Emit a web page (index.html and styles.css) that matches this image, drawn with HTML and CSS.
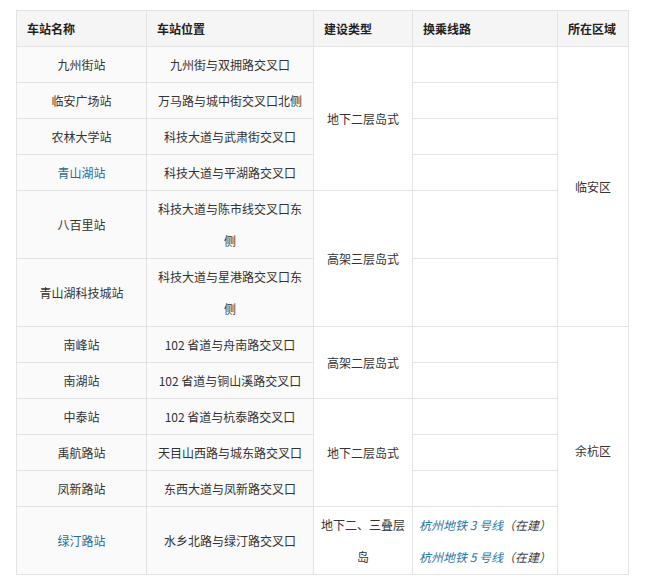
FILE: index.html
```html
<!DOCTYPE html>
<html lang="zh">
<head>
<meta charset="utf-8">
<title>车站列表</title>
<link rel="stylesheet" href="styles.css">
</head>
<body>
<div class="wrap">
<table class="stations">
<colgroup>
<col class="c1"><col class="c2"><col class="c3"><col class="c4"><col class="c5">
</colgroup>
<thead>
<tr><th>车站名称</th><th>车站位置</th><th>建设类型</th><th>换乘线路</th><th>所在区域</th></tr>
</thead>
<tbody>
<tr><td class="tint">九州街站</td><td class="tint">九州街与双拥路交叉口</td><td rowspan="4">地下二层岛式</td><td></td><td rowspan="6">临安区</td></tr>
<tr><td class="tint">临安广场站</td><td class="tint">万马路与城中街交叉口北侧</td><td></td></tr>
<tr><td class="tint">农林大学站</td><td class="tint">科技大道与武肃街交叉口</td><td></td></tr>
<tr><td class="tint link">青山湖站</td><td class="tint">科技大道与平湖路交叉口</td><td></td></tr>
<tr><td class="tint">八百里站</td><td class="tint">科技大道与陈市线交叉口东侧</td><td rowspan="2">高架三层岛式</td><td></td></tr>
<tr><td class="tint">青山湖科技城站</td><td class="tint">科技大道与星港路交叉口东侧</td><td></td></tr>
<tr><td class="tint">南峰站</td><td class="tint">102 省道与舟南路交叉口</td><td rowspan="2">高架二层岛式</td><td></td><td rowspan="6">余杭区</td></tr>
<tr><td class="tint">南湖站</td><td class="tint">102 省道与铜山溪路交叉口</td><td></td></tr>
<tr><td class="tint">中泰站</td><td class="tint">102 省道与杭泰路交叉口</td><td rowspan="3">地下二层岛式</td><td></td></tr>
<tr><td class="tint">禹航路站</td><td class="tint">天目山西路与城东路交叉口</td><td></td></tr>
<tr><td class="tint">凤新路站</td><td class="tint">东西大道与凤新路交叉口</td><td></td></tr>
<tr><td class="tint link">绿汀路站</td><td class="tint">水乡北路与绿汀路交叉口</td><td class="tight">地下二、三叠层岛</td><td class="lines"><span class="ln">杭州地铁 3 号线</span>（在建）<br><span class="ln">杭州地铁 5 号线</span>（在建）</td></tr>
</tbody>
</table>
</div>
</body>
</html>
```
FILE: styles.css
```css
html, body {
  margin: 0;
  padding: 0;
  background: #ffffff;
}
.wrap {
  padding: 10px 0 0 16px;
}
.stations {
  border-collapse: collapse;
  table-layout: fixed;
  width: 612px;
  font-family: "Noto Sans CJK SC", "Liberation Sans", sans-serif;
  font-size: 12px;
  color: #333333;
}
.c1 { width: 130px; }
.c2 { width: 167px; }
.c3 { width: 99px; }
.c4 { width: 145px; }
.c5 { width: 71px; }
.stations th,
.stations td {
  border: 1px solid #e3e3e3;
  line-height: 32px;
  padding: 1.5px 8px;
  vertical-align: middle;
}
.stations th {
  background: #f5f5f5;
  text-align: left;
  font-weight: bold;
  padding-left: 10px;
  color: #222222;
}
.stations td {
  text-align: center;
}
.stations td.tint {
  background: #fafafa;
}
.stations td.link {
  color: #1f6e98;
}
.stations td.tight {
  padding: 1.5px 2px;
}
.stations td.lines {
  font-style: italic;
  color: #444444;
  padding: 1.5px 4px;
}
.ln {
  color: #2a78a8;
}
```
